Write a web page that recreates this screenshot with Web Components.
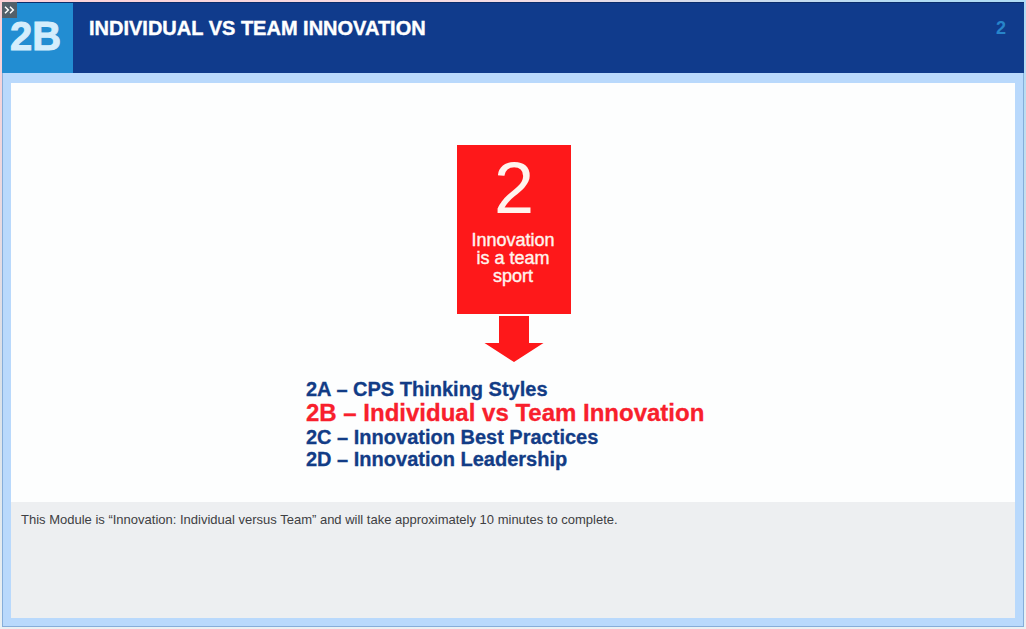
<!DOCTYPE html>
<html lang="en">
<head>
<meta charset="utf-8">
<title>Individual vs Team Innovation</title>
<style>
  html { height: 100%; background: linear-gradient(90deg, #fdd0d6, #f4dce4 50%, #b0dcf5 90%); }
  body { margin: 0; min-height: 100%; font-family: "Liberation Sans", Arial, sans-serif; }
</style>
</head>
<body>
<module-frame>
  <module-header slot="header" code="2B" page="2">INDIVIDUAL VS TEAM INNOVATION</module-header>
  <module-stage>
    <topic-card number="2">Innovation is a team sport</topic-card>
    <lesson-list slot="list">
      <lesson-item>2A – CPS Thinking Styles</lesson-item>
      <lesson-item current>2B – Individual vs Team Innovation</lesson-item>
      <lesson-item>2C – Innovation Best Practices</lesson-item>
      <lesson-item>2D – Innovation Leadership</lesson-item>
    </lesson-list>
  </module-stage>
  <module-notes>This Module is “Innovation: Individual versus Team” and will take approximately 10 minutes to complete.</module-notes>
</module-frame>
<script>
function define(name, render) {
  customElements.define(name, class extends HTMLElement {
    connectedCallback() {
      if (this.shadowRoot) return;
      this.attachShadow({ mode: 'open' }).innerHTML = render(this);
    }
  });
}

define('module-frame', () => `
  <style>
    :host { display: flex; box-sizing: border-box; min-height: 100vh; padding: 2px;
      background: linear-gradient(transparent, #d9e1e8 60%, #eaf0f3); }
    .frame { flex: 1; display: flex; flex-direction: column; background: #b9d9fc;
      box-shadow: inset 0 0 0 1px #86aeda; }
    .panel { flex: 1; display: flex; flex-direction: column; margin: 10px 9px 9px;
      background: #fdfefe; }
  </style>
  <div class="frame">
    <slot name="header"></slot>
    <main class="panel"><slot></slot></main>
  </div>`);

define('module-header', el => `
  <style>
    :host { display: block; }
    header { position: relative; display: flex; min-height: 71px; box-sizing: border-box;
      background: #103b8c; border-top: 1px solid #0b2d6c; }
    .code { width: 71px; box-sizing: border-box; padding: 11px 4px 0 0; text-align: center;
      background: #228dd2; color: #d4edfc; font-size: 40px; line-height: 44px; font-weight: bold;
      -webkit-text-stroke: 1px currentColor; }
    h1 { flex: 1; margin: 0; padding: 13px 16px; color: #fff; font-size: 20px; line-height: 24px;
      -webkit-text-stroke: 0.4px currentColor; }
    .page { padding: 13px 18px 13px 16px; color: #2785ca; font-size: 18px; line-height: 24px; font-weight: bold; }
    button { position: absolute; left: 0; top: -1px; width: 15px; height: 16px; padding: 0; border: 0;
      background: #53606a; display: grid; place-items: center; }
  </style>
  <header>
    <div class="code">${el.getAttribute('code')}</div>
    <h1><slot></slot></h1>
    <div class="page">${el.getAttribute('page')}</div>
    <button type="button" aria-label="Expand menu">
      <svg width="11" height="8" viewBox="0 0 11 8" fill="none" stroke="#fff" stroke-width="1.5">
        <path d="M1 .7 4.3 4 1 7.3M6 .7 9.3 4 6 7.3"/>
      </svg>
    </button>
  </header>`);

define('module-stage', () => `
  <style>
    :host { flex: 1; display: flex; flex-direction: column; align-items: center;
      padding: 62px 16px 30px 18px; box-sizing: border-box; }
  </style>
  <slot></slot><slot name="list"></slot>`);

define('topic-card', el => `
  <style>
    :host { display: flex; flex-direction: column; align-items: center; gap: 2px; }
    .card { box-sizing: border-box; width: 114px; min-height: 169px; padding: 8px 14px 8px 12px; text-align: center;
      background: #fe181a; color: #fff4ee; }
    .number { font-size: 72px; line-height: 70px; padding-left: 2px; }
    p { margin: 8px 0 0; font-size: 18px; line-height: 18px; -webkit-text-stroke: 0.4px currentColor; }
    svg { display: block; }
  </style>
  <div class="card">
    <div class="number">${el.getAttribute('number')}</div>
    <p><slot></slot></p>
  </div>
  <svg width="60" height="46" viewBox="0 0 60 46" aria-hidden="true">
    <path d="M15 0H45V27H59.5L30 46 .5 27H15Z" fill="#fe181a"/>
  </svg>`);

define('lesson-list', () => `
  <style>
    :host { display: block; width: 416px; max-width: 100%; margin-top: 16px; }
    div { display: flex; flex-direction: column; }
  </style>
  <div role="list"><slot></slot></div>`);

define('lesson-item', () => `
  <style>
    :host { display: block; color: #123c86; font-size: 20px; line-height: 22px; font-weight: bold; white-space: nowrap;
      -webkit-text-stroke: 0.3px currentColor; }
    :host([current]) { color: #f8202c; font-size: 24px; line-height: 26px; }
  </style>
  <div role="listitem"><slot></slot></div>`);

define('module-notes', () => `
  <style>
    :host { display: block; box-sizing: border-box; min-height: 116px; padding: 9px 10px;
      background: #edeff1; color: #3e4043; font-size: 13px; line-height: 18px; }
    p { margin: 0; }
  </style>
  <p><slot></slot></p>`);
</script>
</body>
</html>
